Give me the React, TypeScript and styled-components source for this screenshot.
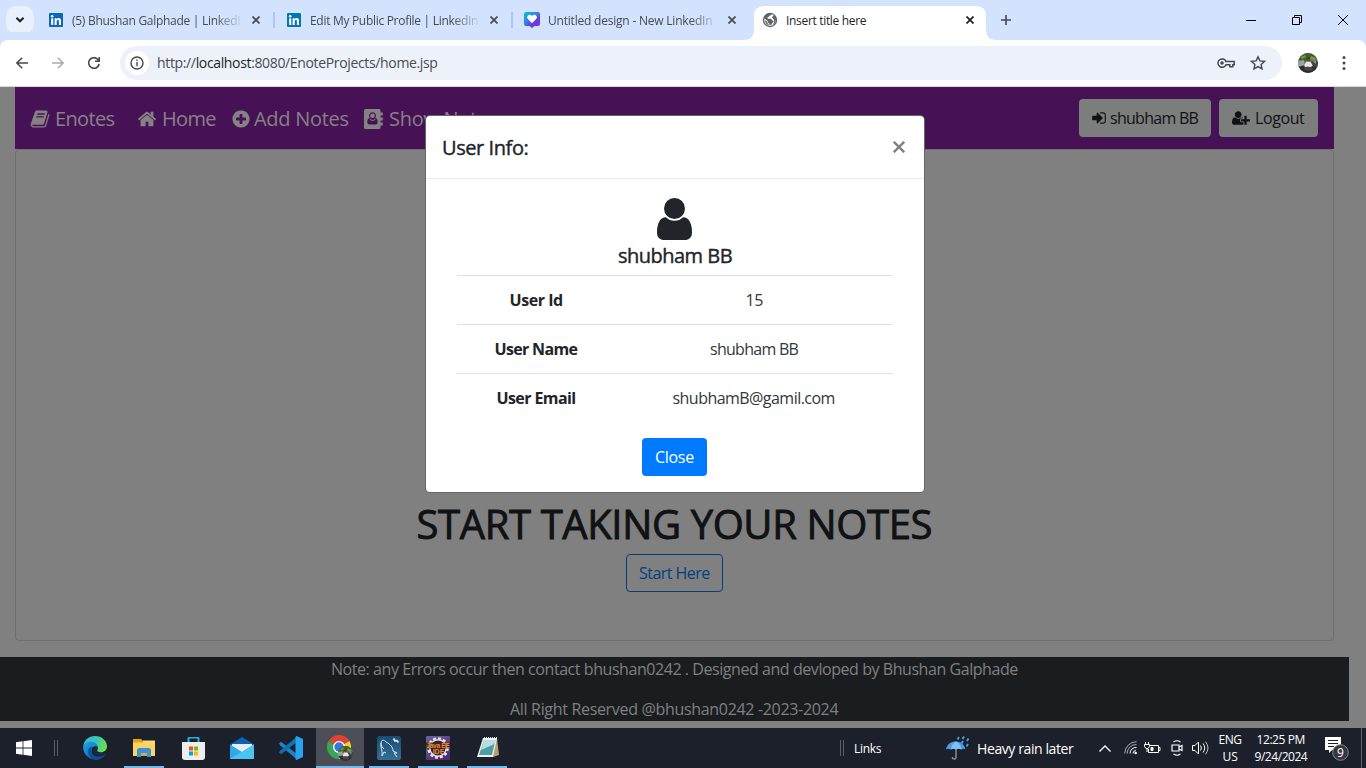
import React from "react";
import styled, { createGlobalStyle } from "styled-components";

const Global = createGlobalStyle`
  * { box-sizing: border-box; }
  body { margin: 0; overflow: hidden; font-family: "Open Sans", "Noto Sans", sans-serif; }
  svg { display: block; flex: none; }
`;

const Screen = styled.div`
  position: relative;
  width: 1366px;
  height: 768px;
  display: flex;
  flex-direction: column;
  overflow: hidden;
  background: #808080;
`;

/* A line of text with a measured width; the tracking tunes the face to it. */
const Label = styled.span<{ $w: number; $size?: number; $track?: number; $weight?: number; $stroke?: number }>`
  display: block;
  flex: none;
  width: ${(p) => p.$w}px;
  white-space: nowrap;
  font-size: ${(p) => p.$size ?? 16}px;
  font-weight: ${(p) => p.$weight ?? 400};
  letter-spacing: ${(p) => p.$track ?? 0}px;
  -webkit-text-stroke: ${(p) => p.$stroke ?? 0}px currentColor;
`;

/* ---------- browser chrome ---------- */

const TabStrip = styled.div`
  height: 40px;
  flex: none;
  display: flex;
  align-items: center;
  background: #d3e3fd;
`;

const TabSearch = styled.div`
  width: 28px;
  height: 28px;
  margin: 0 3px 0 6px;
  display: grid;
  place-items: center;
  border-radius: 10px;
  background: #e9f0fe;
`;

const Tab = styled.div<{ $active?: boolean; $divider?: boolean }>`
  position: relative;
  width: 238px;
  height: 40px;
  flex: none;
  display: flex;
  align-items: center;
  padding: 0 13px 0 12px;
  color: ${(p) => (p.$active ? "#1f1f1f" : "#454a50")};
  &::after {
    content: "";
    position: absolute;
    right: 0;
    top: 12px;
    width: 2px;
    height: 16px;
    background: ${(p) => (p.$divider ? "#a8c7fa" : "transparent")};
  }
`;

const ActiveShape = styled.svg`
  position: absolute;
  left: -7px;
  top: 6px;
`;

const TabIcon = styled.div`
  position: relative;
  width: 16px;
  height: 16px;
  margin: 0 8px 0 -1px;
`;

const TabTitle = styled.div<{ $fade?: boolean }>`
  position: relative;
  width: 168px;
  height: 20px;
  line-height: 21px;
  overflow: hidden;
  mask-image: ${(p) => (p.$fade ? "linear-gradient(90deg, #000 142px, transparent 172px)" : "none")};
`;

const TabClose = styled.div`
  position: relative;
  margin-left: auto;
  width: 12px;
  height: 12px;
  display: grid;
  place-items: center;
`;

const NewTab = styled.div`
  width: 34px;
  display: grid;
  place-items: center;
`;

const WindowButtons = styled.div`
  margin-left: auto;
  display: flex;
  & > div {
    width: 46px;
    display: grid;
    place-items: center;
  }
`;

const Toolbar = styled.div`
  height: 47px;
  flex: none;
  display: flex;
  align-items: center;
  background: #fff;
  border-bottom: 1px solid #d9d9d9;
  border-radius: 8px 8px 0 0;
  box-shadow: 0 -8px 0 #d3e3fd;
`;

const ToolIcon = styled.div<{ $w?: number }>`
  width: ${(p) => p.$w ?? 36}px;
  display: grid;
  place-items: center;
`;

const Omnibox = styled.div`
  width: 1162px;
  height: 34px;
  margin-left: 8px;
  display: flex;
  align-items: center;
  border-radius: 17px;
  background: #edf1fa;
  padding: 0 8px 0 5px;
`;

const InfoBadge = styled.div`
  width: 24px;
  height: 24px;
  border-radius: 50%;
  background: #fff;
  display: grid;
  place-items: center;
  margin-right: 8px;
`;

const Url = styled(Label)`
  color: #484b50;
  margin-right: auto;
  padding-bottom: 2px;
  b { font-weight: 400; color: #1f1f1f; }
`;

/* ---------- web page ---------- */

const Page = styled.main`
  height: 641px;
  flex: none;
  display: flex;
  flex-direction: column;
  background: #808080;
`;

const NavBar = styled.nav`
  margin: 0 32px 0 15px;
  height: 62px;
  display: flex;
  align-items: center;
  padding: 0 16px 0 15px;
  background: #471255;
  color: #858286;
`;

const NavItem = styled.div<{ $gap: number }>`
  display: flex;
  align-items: center;
  margin-right: ${(p) => p.$gap}px;
  padding-top: 2px;
  ${Label} { line-height: 28px; }
`;

const NavIcon = styled.div<{ $w: number }>`
  width: ${(p) => p.$w}px;
  display: flex;
`;

const NavActions = styled.div`
  display: flex;
  gap: 8px;
  margin-left: auto;
`;

const NavButton = styled.div<{ $w: number; $pad: number }>`
  width: ${(p) => p.$w}px;
  height: 38px;
  padding-left: ${(p) => p.$pad}px;
  display: flex;
  align-items: center;
  border-radius: 4px;
  background: #7c7d7d;
  color: #101214;
`;

const Card = styled.section`
  margin: 0 32px 0 15px;
  height: 492px;
  border: 1px solid #6f6f6f;
  border-radius: 4px;
  display: flex;
  flex-direction: column;
  align-items: center;
  padding-top: 350px;
`;

const Heading = styled(Label)`
  color: #101214;
  line-height: 48px;
`;

const StartButton = styled.div`
  width: 97px;
  height: 38px;
  margin-top: 6px;
  border: 1px solid #004080;
  border-radius: 4px;
  color: #004080;
  display: grid;
  place-items: center;
`;

const Footer = styled.footer`
  width: 1349px;
  height: 64px;
  margin-top: 16px;
  display: flex;
  flex-direction: column;
  align-items: center;
  gap: 16px;
  background: #1a1d20;
  color: #808080;
  ${Label} { line-height: 24px; }
`;

/* ---------- dialog ---------- */

const Dialog = styled.div`
  position: absolute;
  left: 426px;
  top: 116px;
  width: 498px;
  height: 376px;
  border-radius: 4px;
  background: #fff;
  color: #212529;
  box-shadow: 0 0 0 1px #666;
  display: flex;
  flex-direction: column;
  align-items: center;
`;

const DialogHeader = styled.header`
  width: 100%;
  height: 63px;
  display: flex;
  align-items: center;
  justify-content: space-between;
  padding: 0 19px 0 16px;
  border-bottom: 1px solid #e9ecef;
`;

const UserGlyph = styled.div`
  margin: 19px 0 0 -2px;
  height: 44px;
`;

const UserName = styled(Label)`
  line-height: 28px;
`;

const InfoTable = styled.div`
  width: 436px;
  margin-top: 5px;
`;

const InfoRow = styled.div`
  display: grid;
  grid-template-columns: 158px 278px;
  justify-items: center;
  align-items: center;
  height: 49px;
  border-top: 1px solid #dee2e6;
  padding-bottom: 1px;
`;

const InfoValue = styled(Label)`
  color: #33373b;
`;

const CloseButton = styled.div`
  width: 65px;
  height: 38px;
  margin: 16px 1px 0 0;
  border-radius: 4px;
  background: #007bff;
  color: #fff;
  display: grid;
  place-items: center;
`;

/* ---------- taskbar ---------- */

const TaskBar = styled.div`
  height: 40px;
  flex: none;
  display: flex;
  align-items: center;
  background: #1c202b;
  color: #fff;
`;

const StartCell = styled.div`
  width: 48px;
  display: grid;
  place-items: center;
`;

const Grip = styled.div<{ $ml: number; $mr: number }>`
  width: 4px;
  height: 16px;
  margin: 0 ${(p) => p.$mr}px 0 ${(p) => p.$ml}px;
  border: solid #5b5e66;
  border-width: 0 1px;
`;

const AppCell = styled.div<{ $open?: boolean; $active?: boolean }>`
  width: 48px;
  height: 40px;
  margin-right: 1px;
  display: grid;
  place-items: center;
  background: ${(p) => (p.$active ? "#4b4e56" : "transparent")};
  background-image: ${(p) => (p.$open || p.$active ? "linear-gradient(#76b9ed, #76b9ed)" : "none")};
  background-size: ${(p) => (p.$active ? "48px" : "40px")} 2px;
  background-position: bottom center;
  background-repeat: no-repeat;
`;

const Tray = styled.div`
  flex: 1;
  display: flex;
  align-items: center;
`;

const TraySlot = styled.div<{ $w: number; $ml?: number }>`
  width: ${(p) => p.$w}px;
  margin-left: ${(p) => p.$ml ?? 0}px;
  display: grid;
  place-items: center;
`;

const TrayStack = styled.div<{ $w: number }>`
  width: ${(p) => p.$w}px;
  display: flex;
  flex-direction: column;
  align-items: center;
  ${Label} { line-height: 17px; }
`;

const ShowDesktop = styled.div`
  margin-left: auto;
  width: 5px;
  height: 40px;
  border-left: 1px solid #60636a;
`;

/* ---------- icons ---------- */

const paths = {
  book: "M1703 478q40 57 18 129l-275 906q-19 64-76.5 107.5t-122.5 43.5h-923q-77 0-148.5-53.5t-99.5-131.5q-24-67-2-127 0-4 3-27t4-37q1-8-3-21.5t-3-19.5q2-11 8-21t16.5-23.5 16.5-23.5q23-38 45-91.5t30-91.5q3-10 .5-30t-.5-28q3-11 17-28t17-23q21-36 42-92t25-90q1-9-2.5-32t.5-28q4-13 22-30.5t22-22.5q19-26 42.5-84.5t27.5-96.5q1-8-3-25.5t-2-26.5q2-8 9-18t18-23 17-21q8-12 16.5-30.5t15-35 16-36 19.5-32 26.5-23.5 36-11.5 47.5 5.5l-1 3q38-9 51-9h761q74 0 114 56t18 130l-274 906q-36 119-71.5 153.5t-128.5 34.5h-869q-27 0-38 15-11 16-1 43 24 70 144 70h923q29 0 56-15.5t35-41.5l300-987q7-22 5-57 38 15 59 43zm-1064 2q-4 13 2 22.5t20 9.5h608q13 0 25.5-9.5t16.5-22.5l21-64q4-13-2-22.5t-20-9.5h-608q-13 0-25.5 9.5t-16.5 22.5zm-83 256q-4 13 2 22.5t20 9.5h608q13 0 25.5-9.5t16.5-22.5l21-64q4-13-2-22.5t-20-9.5h-608q-13 0-25.5 9.5t-16.5 22.5z",
  home: "M1472 992v480q0 26-19 45t-45 19h-384v-384h-256v384h-384q-26 0-45-19t-19-45v-480q0-1 .5-3t.5-3l575-474 575 474q1 2 1 6zm223-69l-62 74q-8 9-21 11h-3q-13 0-21-7l-692-577-692 577q-12 8-24 7-13-2-21-11l-62-74q-8-10-7-23.5t11-21.5l719-599q32-26 76-26t76 26l244 204v-195q0-14 9-23t23-9h192q14 0 23 9t9 23v408l219 182q10 8 11 21.5t-7 23.5z",
  plus: "M1344 960v-128q0-26-19-45t-45-19h-256v-256q0-26-19-45t-45-19h-128q-26 0-45 19t-19 45v256h-256q-26 0-45 19t-19 45v128q0 26 19 45t45 19h256v256q0 26 19 45t45 19h128q26 0 45-19t19-45v-256h256q26 0 45-19t19-45zm320-64q0 209-103 385.5t-279.5 279.5-385.5 103-385.5-103-279.5-279.5-103-385.5 103-385.5 279.5-279.5 385.5-103 385.5 103 279.5 279.5 103 385.5z",
  signIn: "M1312 896q0 26-19 45l-544 544q-19 19-45 19t-45-19-19-45v-288h-448q-26 0-45-19t-19-45v-384q0-26 19-45t45-19h448v-288q0-26 19-45t45-19 45 19l544 544q19 19 19 45zm352-352v704q0 119-84.5 203.5t-203.5 84.5h-320q-13 0-22.5-9.5t-9.5-22.5q0-4-1-20t-.5-26.5 3-23.5 10-19.5 20.5-6.5h320q66 0 113-47t47-113v-704q0-66-47-113t-113-47h-312l-11.5-1-11.5-3-8-5.5-7-9-2-13.5q0-4-1-20t-.5-26.5 3-23.5 10-19.5 20.5-6.5h320q119 0 203.5 84.5t84.5 203.5z",
  userPlus: "M704 896q-159 0-271.5-112.5t-112.5-271.5 112.5-271.5 271.5-112.5 271.5 112.5 112.5 271.5-112.5 271.5-271.5 112.5zm960 128h352q13 0 22.5 9.5t9.5 22.5v192q0 13-9.5 22.5t-22.5 9.5h-352v352q0 13-9.5 22.5t-22.5 9.5h-192q-13 0-22.5-9.5t-9.5-22.5v-352h-352q-13 0-22.5-9.5t-9.5-22.5v-192q0-13 9.5-22.5t22.5-9.5h352v-352q0-13 9.5-22.5t22.5-9.5h192q13 0 22.5 9.5t9.5 22.5v352zm-736 224q0 52 38 90t90 38h256v238q-68 50-171 50h-874q-121 0-194-69t-73-190q0-53 3.5-103.5t14-109 26.5-108.5 43-97.5 62-81 85.5-53.5 111.5-20q19 0 39 17 79 61 154.5 91.5t164.5 30.5 164.5-30.5 154.5-91.5q20-17 39-17 132 0 217 96h-223q-52 0-90 38t-38 90v192z",
  user: "M1536 1399q0 109-62.5 187t-150.5 78h-854q-88 0-150.5-78t-62.5-187q0-85 8.5-160.5t31.5-152 58.5-131 94-89 134.5-34.5q131 128 313 128t313-128q76 0 134.5 34.5t94 89 58.5 131 31.5 152 8.5 160.5zm-256-887q0 159-112.5 271.5t-271.5 112.5-271.5-112.5-112.5-271.5 112.5-271.5 271.5-112.5 271.5 112.5 112.5 271.5z",
};

const Glyph = ({ d, size, box = "0 0 1792 1792", w }: { d: string; size: number; box?: string; w?: number }) => (
  <svg width={w ?? size} height={size} viewBox={box} fill="currentColor"><path d={d} /></svg>
);

const AddressBook = () => (
  <svg width="20" height="20" viewBox="0 0 20 20" fill="currentColor">
    <path fillRule="evenodd" d="M1.500 0h13.500a1.500 1.500 0 0 1 1.500 1.500V3.600h2.300v2.800h-2.300v2.200h2.300v2.800h-2.300v2.200h2.300v2.800h-2.300v2.100a1.500 1.500 0 0 1-1.500 1.500H1.500A1.500 1.500 0 0 1 0 18.500v-17A1.500 1.500 0 0 1 1.500 0ZM8.500 3.300a3.500 3.500 0 0 0-2.700 5.700C4.100 9 3.300 10.700 3.300 13c0 1.600.8 2.500 2 2.500h6.400c1.200 0 2-.9 2-2.500 0-2.300-.8-4-2.500-4A3.500 3.500 0 0 0 8.500 3.300Z" />
    <circle cx="8.500" cy="6.800" r="2.300" />
    <path d="M5.600 10.200c1.700 1.600 4.100 1.600 5.800 0" fill="none" stroke="currentColor" strokeWidth="1" />
  </svg>
);

const Cross = ({ size = 8, color = "#45494e", sw = 1.7 }: { size?: number; color?: string; sw?: number }) => (
  <svg width={size} height={size} viewBox="0 0 8 8" stroke={color} strokeWidth={sw}><path d="M.5.5l7 7M7.500.5l-7 7" /></svg>
);

const LinkedIn = ({ color }: { color: string }) => (
  <svg width="16" height="16" viewBox="-1 -1 16 16">
    <rect width="14" height="14" rx="1" fill={color} />
    <g fill="#fff"><circle cx="3.200" cy="3.200" r="1.250" /><rect x="2.150" y="5.300" width="2.100" height="6.600" />
      <path d="M5.600 5.300h2v.9c.4-.7 1.100-1.100 2-1.100 1.900 0 2.400 1.200 2.400 3v3.800H9.900V8.500c0-.9-.1-1.600-1-1.600s-1.200.7-1.200 1.600v3.400H5.600Z" /></g>
  </svg>
);

const Favicon = () => (
  <svg width="16" height="16" viewBox="0 0 16 16">
    <defs><linearGradient id="fav" x1="0" y1="0" x2=".8" y2="1"><stop stopColor="#05c3cc" /><stop offset=".45" stopColor="#2c85e8" /><stop offset=".7" stopColor="#6a3be4" /><stop offset="1" stopColor="#7d2ae8" /></linearGradient></defs>
    <path d="M2 0h12a2 2 0 0 1 2 2v10a2 2 0 0 1-2 2h-3.500L8 16l-2.500-2H2a2 2 0 0 1-2-2V2a2 2 0 0 1 2-2Z" fill="url(#fav)" />
    <path d="M8 11.200 3.900 7.100a2.500 2.500 0 0 1 0-3.600c1.200-1.100 3-.9 4.100.7 1.100-1.600 2.900-1.800 4.100-.7a2.500 2.500 0 0 1 0 3.600Z" fill="#fff" />
  </svg>
);

const Globe = () => (
  <svg width="16" height="16" viewBox="0 0 16 16">
    <circle cx="8" cy="8" r="7.200" fill="#5f6368" />
    <path d="M9.500 2.200c-.2 1-.9 1.300-2 1.500-.5.100-.4 1.300-1.300 1.400-.8.100-1 .6-.5 1.300.5.600 1.400.2 2.600.4 1.500.2 1.400 1.700 2.600 1.900.9.100.7 1.300-.1 1.800-.9.500-.7 1.700-1.700 2.200-.8.400-1.800 1-1.700.300.100-.9-.1-1.500-.9-1.900-.9-.5-.4-1.700-1.300-2.500L2.400 6.400A5.800 5.800 0 0 0 8 13.900a5.900 5.900 0 0 0 1-.1c2.500-.5 4.800-2.800 4.900-5.800-.8.400-1.300-.4-2.100-.8-.7-.4-.5-1.100-1.100-1.300-.8-.3-.8-1.200.1-1.500.6-.2.800-.7.900-1.300-.4-.4-1-.7-2.600-.9Z" fill="#fff" />
    <path d="M3 8.200c1.200.4 2.100 1.100 2.400 2.200.3 1.200 1.200 1 1.500 2.800-2-.3-3.900-2.500-3.900-5Z" fill="#5f6368" />
    <path d="M11.500 6.800c1 .2 1.700.6 2.400 1-.1 2.200-1.200 4-3.200 5.200.1-1.100 1-1.200 1.100-2.200.1-.8.700-1.300.4-2.100Z" fill="#5f6368" />
  </svg>
);

const Avatar = ({ size }: { size: number }) => (
  <svg width={size} height={size} viewBox="0 0 20 20">
    <defs><clipPath id="face"><circle cx="10" cy="10" r="10" /></clipPath></defs>
    <g clipPath="url(#face)">
      <rect width="20" height="20" fill="#5b6b55" />
      <path d="M0 0h20v6L13 5 7 8 0 8Z" fill="#41622c" /><path d="M13 3l5 2-1 3-5-2ZM3 4l4-2 1 2-4 2Z" fill="#7b9647" />
      <path d="M0 8l6-1 1 6-7 2Z" fill="#9aa39e" /><path d="M13 9l7-1v7l-6-1Z" fill="#36454c" /><path d="M15 8.500l3-.5v3Z" fill="#8f9a9a" />
      <path d="M0 14l7-2 6 1 7 2v5H0Z" fill="#2b2e31" />
      <path d="M8 8.800h4.500l2.300 4-2 1.200H7.500l-1.500-1Z" fill="#ebe4e3" /><circle cx="10.300" cy="6.600" r="1.700" fill="#70442f" />
      <path d="M8.400 5.600q1.900-2 3.800 0Z" fill="#211c18" /><path d="M6 14.500l4-1 5 1.500-1 2.500H7Z" fill="#4a4650" />
    </g>
  </svg>
);

const Edge = () => (
  <svg width="24" height="24" viewBox="0 0 24 24">
    <defs>
      <linearGradient id="eg" x1="0" y1=".2" x2="1" y2=".5"><stop stopColor="#31b5ea" /><stop offset=".55" stopColor="#39c8ad" /><stop offset="1" stopColor="#70df4f" /></linearGradient>
      <linearGradient id="eb" x1="0" y1="0" x2=".7" y2="1"><stop stopColor="#1da5e5" /><stop offset="1" stopColor="#0865bd" /></linearGradient>
    </defs>
    <path d="M.2 10.500C1 4 6 0 12 0c7 0 12 5 12 10.300 0 3.600-2.500 6-6 6-3.300 0-4-1.300-3.800-2.300 2-3-1-6.500-5-6.500-4.500 0-8.200 1.500-9 3Z" fill="url(#eg)" />
    <path d="M.1 11C.7 8 3.700 5.700 7.500 5.700c4.500 0 7.400 2.700 7.500 5.300-3-2-7 0-6.500 4.500.5 4 4.200 6.500 8 7A12 12 0 0 1 .1 11Z" fill="url(#eb)" />
    <path d="M9.500 10.500c-3 3-1 8.500 3.500 9.700 3.700 1 7-.2 9.600-2.200C21 21 17.500 24 12.500 24 7 23.500 3.500 17 6 12.500c1-1.500 2.200-1.900 3.500-2Z" fill="#0c4e98" />
    <path d="M14.500 11.500c.5 1.500-.8 2.300-.6 3.500.3 1.700 4 2.500 8 1.500-1 2-3 3-5.500 3-3.500 0-6-2.500-6-5 0-2 2-3.700 4.100-3Z" fill="#1c2a40" />
  </svg>
);

const Explorer = () => (
  <svg width="22" height="20" viewBox="0 0 22 20">
    <path d="M0 1h8l2 2h12v15H0Z" fill="#e5a50d" /><path d="M0 4.500h22V18H0Z" fill="#fbd362" /><path d="M10 2.500h12v3H10Z" fill="#f9d777" />
    <path d="M4 19v-7q0-2 2-2h10q2 0 2 2v7h-4v-4H8v4Z" fill="#3d92d7" /><path d="M8 15h6v3H8Z" fill="#d7a940" />
  </svg>
);

const Store = () => (
  <svg width="23" height="23" viewBox="0 0 23 23">
    <path d="M6.500 6V1.500q0-1 1-1h8q1 0 1 1V6" fill="none" stroke="#24b1e5" strokeWidth="2" />
    <path d="M0 5h23v15q0 3-3 3H3q-3 0-3-3Z" fill="#eeeeef" />
    <path d="M7 9.500h4v4H7Z" fill="#f25022" /><path d="M12 9.500h4v4h-4Z" fill="#7fba00" /><path d="M7 14.500h4v4H7Z" fill="#00a4ef" /><path d="M12 14.500h4v4h-4Z" fill="#ffb900" />
  </svg>
);

const Mail = () => (
  <svg width="24" height="22" viewBox="0 0 24 22">
    <path d="M0 7.500 12 0l12 7.500V12H0Z" fill="#0864b7" /><path d="M2 7h20v8H2Z" fill="#e9edf2" />
    <path d="M0 7.500 12 15 24 7.500V22H0Z" fill="#2da9ea" /><path d="M0 22 24 7.500V22Z" fill="#48c5f2" />
  </svg>
);

const Code = () => (
  <svg width="24" height="24" viewBox="0 0 24 24">
    <path d="M0 8l2-1.700 16 12.200V24L1 9.700Z" fill="#1a83c7" transform="translate(0 -.5)" />
    <path d="M0 16l2 1.700L18 5.500V0L1 14.300Z" fill="#0f70b0" transform="translate(0 .5)" />
    <path d="M17.500 0 24 3v18l-6.500 3-1-1V1Z" fill="#28a4ef" />
  </svg>
);

const Chrome = () => (
  <svg width="26" height="26" viewBox="0 0 26 26">
    <path d="M12 12 1.600 6A12 12 0 0 1 22.400 6Z" fill="#df4334" /><path d="M12 12 22.400 6A12 12 0 0 1 12 24Z" fill="#fccb30" /><path d="M12 12v12A12 12 0 0 1 1.600 6Z" fill="#37a755" />
    <circle cx="12" cy="12" r="6" fill="#fff" /><circle cx="12" cy="12" r="4.700" fill="#3578e5" />
    <g transform="translate(11 11) scale(.75)"><Avatar size={20} /></g>
  </svg>
);

const Workbench = () => (
  <svg width="24" height="24" viewBox="0 0 24 24">
    <defs><linearGradient id="wb" x2="0" y2="1"><stop stopColor="#174c73" /><stop offset="1" stopColor="#356f96" /></linearGradient></defs>
    <rect width="24" height="24" rx="2" fill="url(#wb)" />
    <path d="M5 20C6 15 3 11 4 7c0-3 3-4 5-1 4 2 7 5 7 9l4 2-3 0 3 4M5 20l2-4 2 1M4 7c0 3 2 5 3 6" fill="none" stroke="#dce7ed" strokeWidth="1" />
    <path d="M16.500 2.500l1.500 2.500 2-.3 1.500 1.800" fill="none" stroke="#dce7ed" strokeWidth="1.800" />
  </svg>
);

const JavaIde = () => (
  <svg width="24" height="24" viewBox="0 0 24 24">
    <defs><linearGradient id="jv" x2=".6" y2="1"><stop stopColor="#75619d" /><stop offset="1" stopColor="#4c2d75" /></linearGradient></defs>
    <rect width="24" height="24" rx="1" fill="url(#jv)" />
    <circle cx="12" cy="12" r="9.600" fill="none" stroke="#e8e7e6" strokeWidth="2.400" strokeDasharray="3 2" /><circle cx="12" cy="12" r="8.200" fill="#302639" stroke="#e8e7e6" strokeWidth="1.400" />
    <path d="M0 6.500h24v6H0Z" fill="#3a2522" opacity=".75" />
    <g fill="#f58a25" fontFamily="Liberation Sans" fontWeight="700" textAnchor="middle"><text x="12" y="11.800" fontSize="6.500" textLength="23">Java EE</text><text x="12.500" y="18" fontSize="7">IDE</text></g>
  </svg>
);

const Notepad = () => (
  <svg width="23" height="22" viewBox="0 0 23 22">
    <path d="M8 1h13l2 17-6 2Z" fill="#b5a070" /><path d="M7 1h14l-4 19H1Z" fill="#eef4f4" /><path d="M8 3h11.500L16 18H3Z" fill="#4f9ca5" /><path d="M8 3h11.500l-1 4L5 13Z" fill="#b9dde0" />
    <path d="M8 .8h13" stroke="#d5d9d9" strokeWidth="1.500" strokeDasharray="1 1" />
  </svg>
);

const Rain = () => (
  <svg width="24" height="24" viewBox="0 0 24 24">
    <path d="M10 12v9q0 2-1.800 2t-1.700-2" fill="none" stroke="#898c91" strokeWidth="1.500" />
    <path d="M0 13.500C1 8 5 5.500 10 5.500s8.500 3 9.500 8q-2-1.300-4 0-2.500-1.300-5.500 0-3-1.300-5.500 0-2.500-1.300-4.500 0Z" fill="#4b9ae4" /><path d="M5 13.500Q6 7 10 5.500q4 1.500 5.500 8-2.500-1.300-5.500 0-3-1.300-5 0Z" fill="#81c0f3" />
    <path d="M13 1l-1.500 2.500M18 .5l-1.500 2.500M22.500 2.500 21 5M17 5l-1.500 2.500M22 8l-1.500 2.500" stroke="#47a1ed" strokeWidth="1.800" />
  </svg>
);

const tabs = [
  { title: "(5) Bhushan Galphade | LinkedIn", w: 168, icon: <LinkedIn color="#0a66c2" />, divider: true, fade: true, track: -0.28 },
  { title: "Edit My Public Profile | LinkedIn", w: 168, icon: <LinkedIn color="#0077b5" />, divider: true, fade: true, track: -0.3 },
  { title: "Untitled design - New LinkedIn", w: 168, icon: <Favicon />, fade: true, track: -0.21 },
  { title: "Insert title here", w: 80, icon: <Globe />, active: true, track: -0.32 },
];

const rows = [
  { name: "User Id", nw: 53, nt: -0.45, value: "15", vw: 17, vt: -0.5 },
  { name: "User Name", nw: 83, nt: -0.66, value: "shubham BB", vw: 88, vt: -0.72 },
  { name: "User Email", nw: 79, nt: -0.6, value: "shubhamB@gamil.com", vw: 163, vt: -0.54 },
];

export default function App() {
  return (
    <Screen>
      <Global />
      <TabStrip>
        <TabSearch><svg width="8" height="6" viewBox="0 0 8 6" fill="none" stroke="#1f1f1f" strokeWidth="2"><path d="M.5.8 4 4.300 7.500.8" /></svg></TabSearch>
        {tabs.map((t) => (
          <Tab key={t.title} $active={t.active} $divider={t.divider}>
            {t.active && <ActiveShape width="252" height="34" viewBox="0 0 252 34" fill="#fff"><path d="M0 34q10 0 10-10V10Q10 0 20 0h212q10 0 10 10v14q0 10 10 10Z" /></ActiveShape>}
            <TabIcon>{t.icon}</TabIcon>
            <TabTitle $fade={t.fade}><Label $w={t.w} $size={12} $track={t.track}>{t.title}</Label></TabTitle>
            <TabClose><Cross color={t.active ? "#1f1f1f" : "#45494e"} /></TabClose>
          </Tab>
        ))}
        <NewTab><svg width="10" height="10" viewBox="0 0 10 10" stroke="#45494e" strokeWidth="1.600"><path d="M5 0v10M0 5h10" /></svg></NewTab>
        <WindowButtons>
          <div><svg width="10" height="10" stroke="#000"><path d="M0 5.500h10" /></svg></div>
          <div><svg width="10" height="10" fill="none" stroke="#000"><path d="M.5 2.500h7v7h-7ZM2.500 2.500v-2h7v7h-2" /></svg></div>
          <div><svg width="10" height="10" stroke="#000"><path d="M0 0l10 10M10 0 0 10" /></svg></div>
        </WindowButtons>
      </TabStrip>
      <Toolbar>
        <ToolIcon $w={4} />
        <ToolIcon><svg width="12" height="12" viewBox="0 0 12 12" fill="none" stroke="#45494e" strokeWidth="1.500"><path d="M12 6H1M6.200.7.9 6l5.300 5.300" /></svg></ToolIcon>
        <ToolIcon><svg width="12" height="12" viewBox="0 0 12 12" fill="none" stroke="#a9abad" strokeWidth="1.500"><path d="M0 6h11M5.800.7 11.100 6l-5.300 5.300" /></svg></ToolIcon>
        <ToolIcon><svg width="12" height="12" viewBox="0 0 12 12" fill="none" stroke="#45494e" strokeWidth="1.600"><path d="M11.200 7A5.300 5.300 0 1 1 10 2.500L11 4M11.300 0v4.300H7" /></svg></ToolIcon>
        <Omnibox>
          <InfoBadge><svg width="14" height="14" viewBox="0 0 14 14" fill="none" stroke="#45494e" strokeWidth="1.400"><circle cx="7" cy="7" r="6" /><path d="M7 6v4.300M7 3.500V5" /></svg></InfoBadge>
          <Url $w={281} $size={14} $track={-0.35}>http://<b>localhost</b>:8080/EnoteProjects/home.jsp</Url>
          <ToolIcon $w={32}><svg width="18" height="10" viewBox="0 0 18 10" fill="none" stroke="#45494e" strokeWidth="1.500"><path d="M9 3.500h8.200v3.200h-1.400v2h-3v-2H9a4.200 4.200 0 1 1 0-3.200Z" /><circle cx="5" cy="5" r="1.800" fill="#45494e" stroke="none" /></svg></ToolIcon>
          <ToolIcon $w={32}><svg width="16" height="16" viewBox="0 0 16 16" fill="none" stroke="#45494e" strokeWidth="1.400"><path d="m8 1.800 1.900 4.100 4.600.5-3.400 3 .9 4.500L8 11.600l-4 2.300.9-4.500-3.400-3 4.600-.5Z" /></svg></ToolIcon>
        </Omnibox>
        <ToolIcon $w={52}><Avatar size={20} /></ToolIcon>
        <ToolIcon $w={20}><svg width="4" height="16" fill="#45494e"><circle cx="2" cy="2.500" r="1.500" /><circle cx="2" cy="8" r="1.500" /><circle cx="2" cy="13.500" r="1.500" /></svg></ToolIcon>
      </Toolbar>

      <Page>
        <NavBar>
          <NavItem $gap={23}><NavIcon $w={25}><Glyph d={paths.book} size={20} /></NavIcon><Label $w={59} $size={20} $track={-0.65}>Enotes</Label></NavItem>
          <NavItem $gap={15}><NavIcon $w={25}><Glyph d={paths.home} size={20} /></NavIcon><Label $w={54} $size={20} $track={-0.7}>Home</Label></NavItem>
          <NavItem $gap={15}><NavIcon $w={23}><Glyph d={paths.plus} size={20} /></NavIcon><Label $w={95} $size={20} $track={-0.28}>Add Notes</Label></NavItem>
          <NavItem $gap={0}><NavIcon $w={25}><AddressBook /></NavIcon><Label $w={106} $size={20} $track={-0.3}>Show Notes</Label></NavItem>
          <NavActions>
            <NavButton $w={132} $pad={12}><NavIcon $w={19}><Glyph d={paths.signIn} size={16} /></NavIcon><Label $w={88} $track={-0.72}>shubham BB</Label></NavButton>
            <NavButton $w={99} $pad={13}><NavIcon $w={23}><Glyph d={paths.userPlus} size={16} w={18} box="0 0 2048 1792" /></NavIcon><Label $w={50} $track={-0.4}>Logout</Label></NavButton>
          </NavActions>
        </NavBar>
        <Card>
          <Heading $w={516} $size={40} $track={-0.37} $stroke={0.9}>START TAKING YOUR NOTES</Heading>
          <StartButton><Label $w={71} $track={-0.55}>Start Here</Label></StartButton>
        </Card>
        <Footer>
          <Label $w={687} $track={-0.44}>Note: any Errors occur then contact bhushan0242 . Designed and devloped by Bhushan Galphade</Label>
          <Label $w={329} $track={-0.32}>All Right Reserved @bhushan0242 -2023-2024</Label>
        </Footer>
      </Page>

      <TaskBar>
        <StartCell><svg width="16" height="16" viewBox="0 0 16 16" fill="#fff"><path d="M0 2.200 6.600 1.300v6.300H0ZM7.400 1.200 16 0v7.600H7.400ZM0 8.400h6.600v6.300L0 13.800ZM7.400 8.400H16V16l-8.600-1.200Z" /></svg></StartCell>
        <Grip $ml={6} $mr={13} />
        <AppCell><Edge /></AppCell>
        <AppCell $open><Explorer /></AppCell>
        <AppCell><Store /></AppCell>
        <AppCell><Mail /></AppCell>
        <AppCell><Code /></AppCell>
        <AppCell $active><Chrome /></AppCell>
        <AppCell $open><Workbench /></AppCell>
        <AppCell $open><JavaIde /></AppCell>
        <AppCell $open><Notepad /></AppCell>
        <Grip $ml={328} $mr={10} />
        <Tray>
          <Label $w={28} $size={12} $track={-0.3}>Links</Label>
          <TraySlot $w={24} $ml={64}><Rain /></TraySlot>
          <TraySlot $w={97} $ml={7}><Label $w={97} $size={14} $track={-0.4}>Heavy rain later</Label></TraySlot>
          <TraySlot $w={12} $ml={25}><svg width="12" height="7" fill="none" stroke="#fff" strokeWidth="1.300"><path d="M.5 6.500 6 1l5.500 5.500" /></svg></TraySlot>
          <TraySlot $w={14} $ml={13}><svg width="14" height="14" viewBox="0 0 14 14" fill="none" stroke="#fff"><path d="M9 12.500a3 3 0 0 1 3-3M6 12.500A6 6 0 0 1 12.500 6.500" /><path d="M3.200 12.500A9 9 0 0 1 12.500 3.500M.7 12.500A12 12 0 0 1 12.500.7" stroke="#aaa" /><circle cx="11.700" cy="12" r="1.200" fill="#fff" stroke="none" /></svg></TraySlot>
          <TraySlot $w={17} $ml={6}><svg width="17" height="12" viewBox="0 0 17 12" fill="none" stroke="#fff"><path d="M6 3.500h8.500v7h-10V7M14.500 5.500h1.500v3h-1.500M1.500 0v2M4.500 0v2M.5 2.500h5v2l-1.500 2h-2l-1.500-2ZM3 6.500v3.500" /><path d="M7 5.500h2v3H7Z" fill="#fff" /></svg></TraySlot>
          <TraySlot $w={12} $ml={10}><svg width="12" height="16" viewBox="0 0 12 16" fill="none" stroke="#fff"><path d="M1 5h7v6H1ZM8 7l3-1.500v5L8 9M2.500 2q3.500-2.500 7 0M2.500 14q3.500 2.500 7 0" strokeWidth="1.200" /></svg></TraySlot>
          <TraySlot $w={17} $ml={9}><svg width="17" height="14" viewBox="0 0 17 14" fill="none" stroke="#fff"><path d="M.5 4.500H3L6.500 1v12L3 9.500H.5ZM8.500 4.500q1.800 2.500 0 5M11 2.500q3.500 4.500 0 9" /><path d="M13.500.7q5 6.300 0 12.600" stroke="#bbb" /></svg></TraySlot>
          <TrayStack $w={42}><Label $w={23} $size={12} $track={-0.5}>ENG</Label><Label $w={15} $size={12}>US</Label></TrayStack>
          <TrayStack $w={59}><Label $w={48} $size={12} $track={-0.42}>12:25 PM</Label><Label $w={52} $size={12} $track={-0.45}>9/24/2024</Label></TrayStack>
          <TraySlot $w={24} $ml={15}>
            <svg width="24" height="25" viewBox="0 -1 24 25"><path d="M0 0h16v13H7l-3 3v-3H0Z" fill="#fff" /><path d="M3 3.500h10M3 6.500h10M3 9.500h6" stroke="#1c202b" /><circle cx="15.500" cy="15.500" r="7.800" fill="#34373d" stroke="#85878b" /><text x="15.500" y="19.800" textAnchor="middle" fontSize="12" fill="#fff" fontFamily="Open Sans">9</text></svg>
          </TraySlot>
          <ShowDesktop />
        </Tray>
      </TaskBar>

      <Dialog>
        <DialogHeader><Label $w={88} $size={20} $track={-0.42} $stroke={0.4}>User Info:</Label><Cross size={12} color="#808080" sw={1.6} /></DialogHeader>
        <UserGlyph><svg width="35" height="42" viewBox="256 128 1280 1536" preserveAspectRatio="none" fill="#212529"><path d={paths.user} /></svg></UserGlyph>
        <UserName $w={114} $size={20} $track={-0.52} $stroke={0.4}>shubham BB</UserName>
        <InfoTable>
          {rows.map((r) => (
            <InfoRow key={r.name}><Label $w={r.nw} $weight={700} $track={r.nt}>{r.name}</Label><InfoValue $w={r.vw} $track={r.vt}>{r.value}</InfoValue></InfoRow>
          ))}
        </InfoTable>
        <CloseButton><Label $w={39} $track={-0.3}>Close</Label></CloseButton>
      </Dialog>
    </Screen>
  );
}
